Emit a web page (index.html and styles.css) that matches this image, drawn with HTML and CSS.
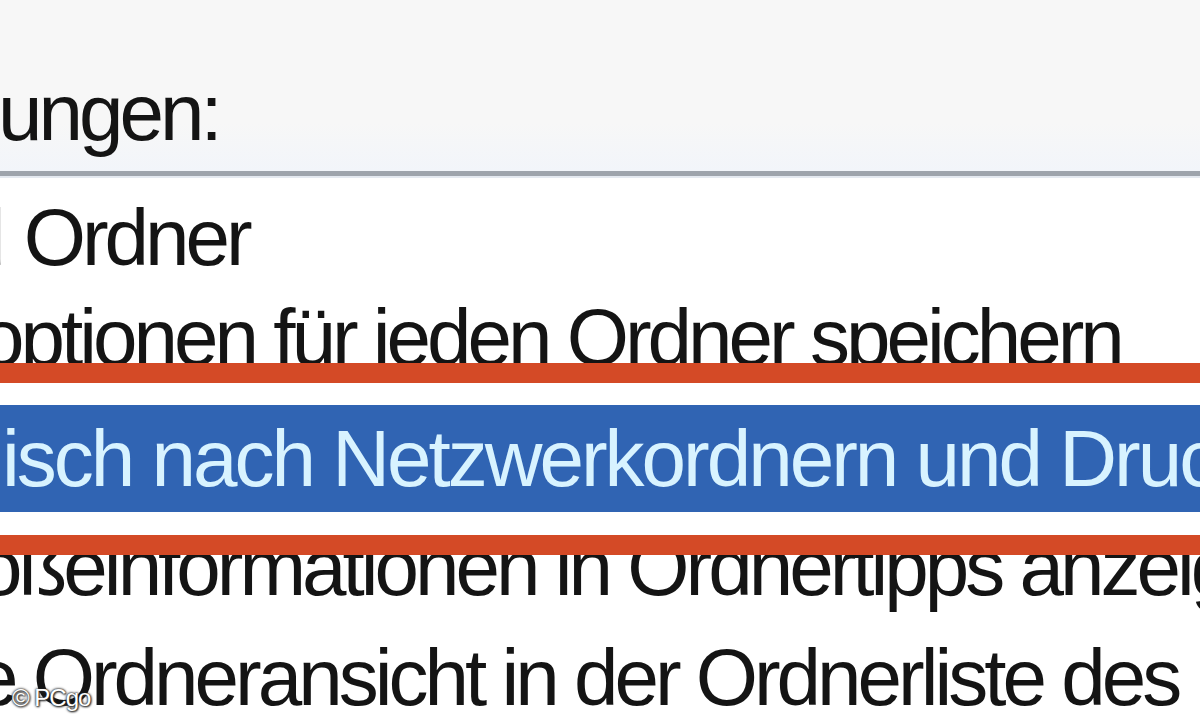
FILE: index.html
```html
<!DOCTYPE html>
<html lang="de">
<head>
  <meta charset="UTF-8" />
  <meta name="viewport" content="width=device-width, initial-scale=1.0"/>
  <title>Ordneroptionen</title>
  <link rel="stylesheet" href="styles.css">
</head>
<body>
  <div class="screen">
    <div class="header">
      <span class="label">ungen:</span>
    </div>
    <div class="list">
      <div class="row row-folder">d Ordner</div>
      <div class="row row-save">optionen für jeden Ordner speichern</div>
      <div class="row row-selected">isch nach Netzwerkordnern und Druckern suchen</div>
      <div class="row row-tips">ößeinformationen in Ordnertipps anzeigen</div>
      <div class="row row-tree">e Ordneransicht in der Ordnerliste des Explorers anzeigen</div>
    </div>

    <!-- red frame round the selected option -->
    <div class="marker"></div>
    <div class="credit">© PCgo</div>
  </div>
</body>
</html>
```

FILE: styles.css
```css
body {
  margin: 0;
  background: #ffffff;
  font-family: 'Liberation Sans', Arial, sans-serif;
}

.screen {
  position: relative;
  width: 1200px;
  height: 720px;
  overflow: hidden;
  background: #ffffff;
}

.header {
  height: 117px;
  padding-top: 54px;
  background: linear-gradient(#f7f7f7 0, #f7f7f7 72%, #f2f5fa 100%);
  border-bottom: 5px solid #9ea4ac;
  box-shadow: 0 2px 0 #e4e9f0;
  font-size: 80px;
  line-height: 117px;
  color: #141414;
  letter-spacing: -4px;
}

.label {
  margin-left: -2px;
}

.list {
  padding-top: 3px;
}

.row {
  white-space: nowrap;
  overflow: hidden;
  font-size: 80px;
  color: #141414;
  letter-spacing: -4px;
}

.row-folder {
  height: 117px;
  line-height: 117px;
  text-indent: -39px;
  word-spacing: 4px;
}

.row-save {
  height: 83px;
  line-height: 83px;
  margin-bottom: 26px;
  text-indent: -20px;
}

.row-selected {
  height: 107px;
  line-height: 107px;
  background: #3064b3;
  color: #d8f3ff;
  letter-spacing: -3px;
  text-indent: 2px;
}

.row-tips {
  height: 111px;
  line-height: 111px;
  text-indent: -22px;
}

.row-tree {
  height: 109px;
  line-height: 109px;
  text-indent: -26px;
}

.marker {
  position: absolute;
  left: 0;
  right: 0;
  top: 363px;
  height: 152px;
  border-top: 20px solid #d44a26;
  border-bottom: 20px solid #d44a26;
}

.credit {
  position: absolute;
  left: 12px;
  top: 684px;
  font-size: 24px;
  color: #ffffff;
  letter-spacing: -1px;
  text-shadow: 0 0 2px #222222, 0 0 3px #222222, 1px 1px 2px #333333;
}
```
